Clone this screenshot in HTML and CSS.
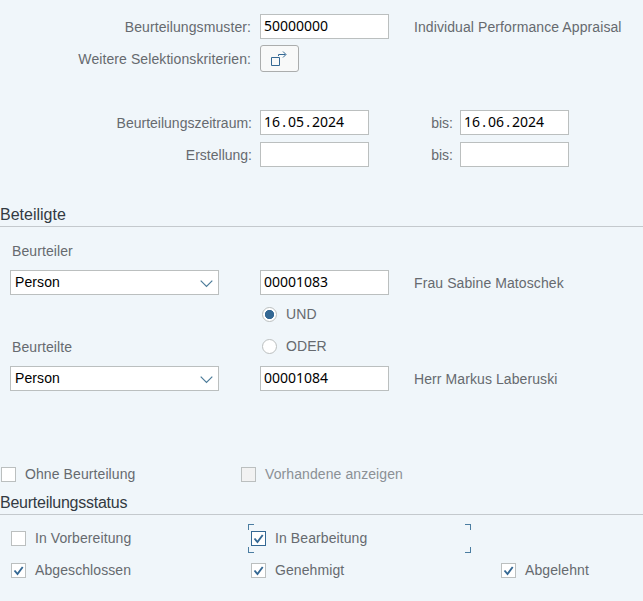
FILE: index.html
```
<!DOCTYPE html>
<html lang="de">
<head>
<meta charset="utf-8">
<title>Beurteilung</title>
<link rel="stylesheet" href="styles.css">
</head>
<body>
<main class="form">
  <section class="criteria">
    <div class="row main-row">
      <span class="label">Beurteilungsmuster:</span>
      <div class="field wide">50000000</div>
      <span class="text">Individual Performance Appraisal</span>
    </div>
    <div class="row main-row">
      <span class="label">Weitere Selektionskriterien:</span>
      <button class="more" aria-label="Weitere Selektionskriterien">
        <svg width="17" height="17" viewBox="0 0 17 17" fill="none" stroke="#346894"><path d="M.5 7.500h8v8h-8zM7.500 6V4.500h7M12 1.500l3 3-3 3"/></svg>
      </button>
    </div>
    <div class="row"></div>
    <div class="row date-row">
      <span class="label">Beurteilungszeitraum:</span>
      <div class="field">16<i>.</i>05<i>.</i>2024</div>
      <span class="label">bis:</span>
      <div class="field">16<i>.</i>06<i>.</i>2024</div>
    </div>
    <div class="row date-row">
      <span class="label">Erstellung:</span>
      <div class="field"></div>
      <span class="label">bis:</span>
      <div class="field"></div>
    </div>
  </section>

  <h2 class="heading">Beteiligte</h2>
  <section class="people">
    <div class="row person-row"><span class="text caption">Beurteiler</span></div>
    <div class="row person-row">
      <div class="select">Person<svg width="13" height="8" viewBox="0 0 13 8" fill="none" stroke="#4c7b99" stroke-width="1.200"><path d="M.7.700l5.800 5.800L12.300.7"/></svg></div>
      <div class="field wide">00001083</div>
      <span class="text">Frau Sabine Matoschek</span>
    </div>
    <div class="row person-row">
      <span></span>
      <div class="option radio-option"><span class="radio on"></span><span class="text">UND</span></div>
    </div>
    <div class="row person-row">
      <span class="text caption">Beurteilte</span>
      <div class="option radio-option"><span class="radio"></span><span class="text">ODER</span></div>
    </div>
    <div class="row person-row">
      <div class="select">Person<svg width="13" height="8" viewBox="0 0 13 8" fill="none" stroke="#4c7b99" stroke-width="1.200"><path d="M.7.700l5.800 5.800L12.300.7"/></svg></div>
      <div class="field wide">00001084</div>
      <span class="text">Herr Markus Laberuski</span>
    </div>
  </section>

  <section class="row filter-row">
    <div class="option"><span class="check"></span><span class="text">Ohne Beurteilung</span></div>
    <div class="option disabled"><span class="check"></span><span class="text">Vorhandene anzeigen</span></div>
  </section>

  <h2 class="heading tight">Beurteilungsstatus</h2>
  <section class="status">
    <div class="option"><span class="check"></span><span class="text">In Vorbereitung</span></div>
    <div class="option focused"><span class="check"><svg viewBox="0 0 13 13"><path d="M2.500 6.500l3 3.500L10.700 3"/></svg></span><span class="text">In Bearbeitung</span></div>
    <div></div>
    <div class="option"><span class="check"><svg viewBox="0 0 13 13"><path d="M2.500 6.500l3 3.500L10.700 3"/></svg></span><span class="text">Abgeschlossen</span></div>
    <div class="option"><span class="check"><svg viewBox="0 0 13 13"><path d="M2.500 6.500l3 3.500L10.700 3"/></svg></span><span class="text">Genehmigt</span></div>
    <div class="option"><span class="check"><svg viewBox="0 0 13 13"><path d="M2.500 6.500l3 3.500L10.700 3"/></svg></span><span class="text">Abgelehnt</span></div>
  </section>
</main>
</body>
</html>
```
FILE: styles.css
```
* { box-sizing: border-box; }
body {
  margin: 0;
  background: #f0f6fa;
  color: #666a6f;
  font: 14px/32px "Liberation Sans", Arial, sans-serif;
  letter-spacing: 0.09px;
  white-space: nowrap;
}
.form { height: 601px; padding-top: 11px; overflow: hidden; }
.row { display: grid; height: 32px; align-items: start; }
.main-row { grid-template-columns: 252px 146px auto; column-gap: 8px; }
.main-row .label { padding-right: 1px; }
.date-row { grid-template-columns: 252px 109px 75px 109px; column-gap: 8px; }
.date-row .label { letter-spacing: 0; }
.date-row .label ~ .label { margin-right: -1px; }
.person-row { grid-template-columns: 250px 154px auto; }
.label { text-align: right; }
.field {
  width: 109px;
  height: 25px;
  margin-top: 3px;
  padding-left: 3px;
  border: 1px solid #bbbfbf;
  background: #fff;
  color: #000;
  font: 400 14px/21px "Noto Sans", sans-serif;
  letter-spacing: 0;
}
.wide { width: 129px; }
.field i { display: inline-block; width: 8px; text-align: center; font-style: normal; }
.more {
  display: flex;
  align-items: center;
  justify-content: center;
  width: 39px;
  height: 27px;
  margin-top: 2px;
  padding: 0;
  border: 1px solid #abadad;
  border-radius: 3px;
  background: #f8f9f9;
}

.heading {
  height: 23px;
  margin: 0;
  border-bottom: 1px solid #c4c9cd;
  color: #333a42;
  font-size: 16px;
  font-weight: 400;
  line-height: 22px;
  letter-spacing: 0;
}
.tight { letter-spacing: -0.25px; }
.criteria { height: 193px; }
.people { height: 232px; padding: 8px 0 0 10px; }
.caption { padding-left: 2px; }
.select {
  display: flex;
  align-items: center;
  justify-content: space-between;
  width: 209px;
  height: 25px;
  margin-top: 3px;
  padding: 0 5px 0 4px;
  border: 1px solid #bbbfbf;
  background: #fff;
  color: #000;
  line-height: 21px;
}
.select svg { margin-top: 2px; }

.option { display: flex; height: 31px; align-items: center; gap: 9px; line-height: 31px; }
.radio-option { padding-left: 2px; }
.radio, .check {
  flex: none;
  width: 15px;
  height: 15px;
  border: 1px solid #bbbfbf;
  background: #fff;
}
.radio { border-radius: 50%; }
.radio.on { background: radial-gradient(circle, #346894 4.300px, #fff 5px); }
.check svg { display: block; width: 13px; height: 13px; fill: none; stroke: #346894; stroke-width: 1.900; }
.filter-row { grid-template-columns: 240px auto; height: 33px; padding-left: 1px; }
.disabled { color: #8b9095; }
.disabled .check { background: #f2f2f2; }
.status {
  display: grid;
  grid-template-columns: 240px 250px auto;
  grid-auto-rows: 32px;
  padding: 8px 0 0 11px;
}
.focused {
  --c: #4b7da1;
  --h: linear-gradient(var(--c), var(--c));
  width: 223px;
  height: 29px;
  margin: 1px 0 0 -3px;
  padding-left: 3px;
  background:
    var(--h) 0 0 / 6px 1px, var(--h) 0 0 / 1px 6px,
    var(--h) 100% 0 / 6px 1px, var(--h) 100% 0 / 1px 6px,
    var(--h) 0 100% / 6px 1px, var(--h) 0 100% / 1px 6px,
    var(--h) 100% 100% / 6px 1px, var(--h) 100% 100% / 1px 6px;
  background-repeat: no-repeat;
}
.focused .check { border-color: #346894; }
```
